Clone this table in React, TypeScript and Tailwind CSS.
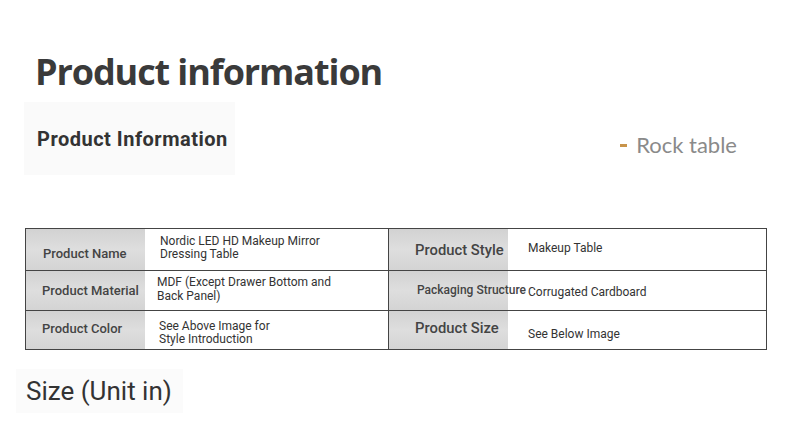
import React from "react";

const roboto = { fontFamily: "Roboto, 'Liberation Sans', sans-serif" };

export default function App() {
  return (
    <div className="w-[790px] h-[438px] bg-white overflow-hidden" style={roboto}>
      <h1
        className="pt-[47px] pl-[35px] text-[36px] leading-[50px] font-bold text-[#3a3a3a] tracking-[-1.1px]"
        style={{ fontFamily: "'Open Sans', 'Noto Sans', sans-serif" }}
      >
        Product information
      </h1>
      <div className="flex justify-between items-center mt-[5px]">
        <div className="ml-[24px] w-[211px] h-[73px] bg-[#fafafa] flex items-center pl-[13px] text-[20px] font-bold text-[#333] leading-none tracking-[0.5px]">
          Product Information
        </div>
        <div className="mr-[53px] flex items-center gap-[9px] mt-[13px]">
          <span className="block w-[7px] h-[3px] bg-[#c8944a]" />
          <span
            className="text-[22px] leading-none text-[#8a8a8a]"
            style={{ fontFamily: "Lato, 'Open Sans', sans-serif" }}
          >
            Rock table
          </span>
        </div>
      </div>

      <div className="mt-[53px] ml-[25px] w-[742px] border border-[#444] text-[#333]">
        {/* row 1 */}
        <div className="flex h-[42px] border-b border-[#444]">
          <div className="flex w-[362px]">
            <div className="w-[119px] bg-linear-to-b from-[#d2d2d2] via-[#dedede] to-[#d4d4d4] flex items-center pl-[17px] pt-[8px] text-[13px] font-medium text-[#444]">
              Product Name
            </div>
            <div className="flex-1 pl-[15px] pt-[6px] text-[12px] leading-[13px]">
              Nordic LED HD Makeup Mirror
              <br />
              Dressing Table
            </div>
          </div>
          <div className="flex flex-1 border-l border-[#444]">
            <div className="w-[119px] bg-linear-to-b from-[#d2d2d2] via-[#dedede] to-[#d4d4d4] flex items-center pl-[26px] pt-[2px] text-[14.8px] font-medium text-[#444] whitespace-nowrap">
              Product Style
            </div>
            <div className="flex-1 pl-[20px] pt-[13px] text-[12px] leading-[13px]">Makeup Table</div>
          </div>
        </div>
        {/* row 2 */}
        <div className="flex h-[40px] border-b border-[#444]">
          <div className="flex w-[362px]">
            <div className="w-[119px] bg-linear-to-b from-[#d2d2d2] via-[#dedede] to-[#d4d4d4] flex items-center pl-[16px] text-[13px] font-medium text-[#444]">
              Product Material
            </div>
            <div className="flex-1 pl-[12px] pt-[4px] text-[12px] leading-[14px]">
              MDF (Except Drawer Bottom and
              <br />
              Back Panel)
            </div>
          </div>
          <div className="flex flex-1 border-l border-[#444]">
            <div className="w-[119px] bg-linear-to-b from-[#d2d2d2] via-[#dedede] to-[#d4d4d4] flex items-center pl-[28px] pb-[2px] text-[12px] font-medium text-[#444] whitespace-nowrap">
              Packaging Structure
            </div>
            <div className="flex-1 pl-[20px] pt-[15px] text-[12px] leading-[13px] whitespace-nowrap">
              Corrugated Cardboard
            </div>
          </div>
        </div>
        {/* row 3 */}
        <div className="flex h-[38px]">
          <div className="flex w-[362px]">
            <div className="w-[119px] bg-linear-to-b from-[#d2d2d2] via-[#dedede] to-[#d4d4d4] flex items-center pl-[16px] pb-[2px] text-[13px] font-medium text-[#444]">
              Product Color
            </div>
            <div className="flex-1 pl-[14px] pt-[9px] text-[12px] leading-[13px]">
              See Above Image for
              <br />
              Style Introduction
            </div>
          </div>
          <div className="flex flex-1 border-l border-[#444]">
            <div className="w-[119px] bg-linear-to-b from-[#d2d2d2] via-[#dedede] to-[#d4d4d4] flex items-center pl-[26px] pb-[3px] text-[14.8px] font-medium text-[#444] whitespace-nowrap">
              Product Size
            </div>
            <div className="flex-1 pl-[20px] pt-[17px] text-[12px] leading-[13px]">See Below Image</div>
          </div>
        </div>
      </div>

      <div className="mt-[19px] ml-[16px] w-[167px] h-[44px] bg-[#fbfbfb] flex items-center pl-[10px] text-[26px] text-[#333] leading-none">
        Size (Unit in)
      </div>
    </div>
  );
}
